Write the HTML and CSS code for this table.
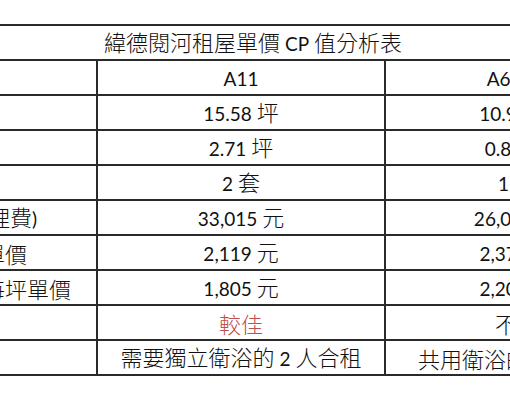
FILE: index.html
```html
<!DOCTYPE html>
<html lang="zh-Hant">
<head>
<meta charset="utf-8">
<title>緯德閱河租屋單價 CP 值分析表</title>
<link rel="stylesheet" href="styles.css">
</head>
<body>
<table class="sheet">
  <colgroup>
    <col class="c1"><col class="c2"><col class="c3">
  </colgroup>
  <tr><td class="title" colspan="3">緯德閱河租屋單價 <span class="n">CP</span> 值分析表</td></tr>
  <tr><td class="label">房型</td><td><span class="n">A11</span></td><td><span class="n">A6/ A8</span></td></tr>
  <tr><td class="label">室內坪數</td><td><span class="n">15.58</span> 坪</td><td><span class="n">10.92</span> 坪</td></tr>
  <tr><td class="label">公設坪數</td><td><span class="n">2.71</span> 坪</td><td><span class="n">0.87</span> 坪</td></tr>
  <tr><td class="label">衛浴</td><td><span class="n">2</span> 套</td><td><span class="n">1</span> 套</td></tr>
  <tr><td class="label">租金<span class="n">(</span>含管理費<span class="n">)</span></td><td><span class="n">33,015</span> 元</td><td><span class="n">26,015</span> 元</td></tr>
  <tr><td class="label">每人月租單價</td><td><span class="n">2,119</span> 元</td><td><span class="n">2,378</span> 元</td></tr>
  <tr><td class="label">室內實坪每坪單價</td><td><span class="n">1,805</span> 元</td><td><span class="n">2,202</span> 元</td></tr>
  <tr><td class="label"><span class="n">CP</span> 值</td><td class="good">較佳</td><td>不佳</td></tr>
  <tr><td class="label">適合對象</td><td>需要獨立衛浴的 <span class="n">2</span> 人合租</td><td>共用衛浴的單人租屋</td></tr>
</table>
</body>
</html>
```
FILE: styles.css
```css
html, body {
  margin: 0;
  padding: 0;
  background: #ffffff;
  overflow: hidden;
}
body {
  font-family: "Noto Sans CJK TC", "Noto Sans CJK SC", sans-serif;
  font-weight: 300;
  font-size: 22px;
  color: #111111;
}
.sheet {
  border-collapse: collapse;
  table-layout: fixed;
  width: 792px;
  margin: 24px 0 0 -144px;
}
.c1 { width: 240px; }
.c2 { width: 288px; }
.c3 { width: 264px; }
.sheet td {
  border: 2px solid #2a2a2a;
  height: 33px;
  padding: 0 4px;
  text-align: center;
  vertical-align: middle;
  line-height: 28px;
  white-space: nowrap;
  overflow: hidden;
}
.sheet td.label {
  text-align: left;
  padding-left: 37px;
}
.sheet td.good {
  color: #c0504d;
}
.n {
  font-family: "Lato", "Liberation Sans", sans-serif;
  font-weight: 400;
  font-size: 19px;
}
```
